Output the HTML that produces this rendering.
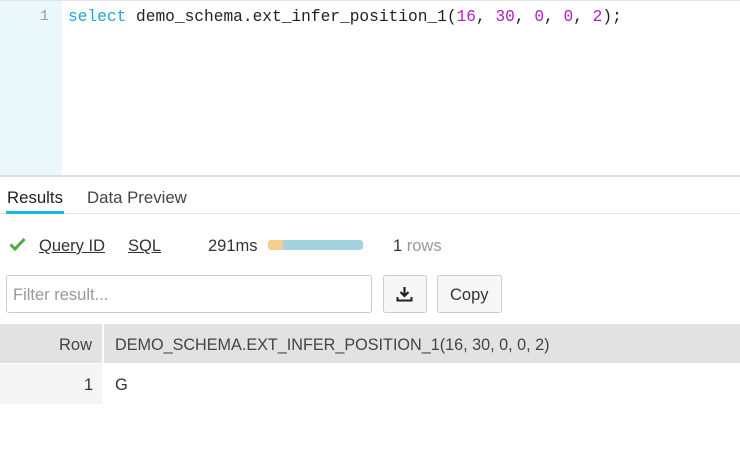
<!DOCTYPE html>
<html><head><style>
body{margin:0;width:740px;height:450px;background:#fff;font-family:"Liberation Sans",sans-serif;position:relative;overflow:hidden;color:#333}
.a{position:absolute}
.mono{font-family:"Liberation Mono",monospace;font-size:16.2px}
</style></head><body>
<div class="a" style="left:0;top:0;width:740px;height:1px;background:#e4e4e4"></div>
<div class="a" style="left:0;top:1px;width:62px;height:175px;background:#eaf8fc"></div>
<div class="a mono" style="left:40px;top:8px;color:#999;font-size:15px">1</div>
<div class="a mono" style="left:68px;top:8px;color:#222;white-space:pre"><span style="color:#1ea8d8">select</span> demo_schema.ext_infer_position_1(<span style="color:#b020c0">16</span>, <span style="color:#b020c0">30</span>, <span style="color:#b020c0">0</span>, <span style="color:#b020c0">0</span>, <span style="color:#b020c0">2</span>);</div>
<div class="a" style="left:0;top:175px;width:740px;height:2px;background:#ddd"></div>
<div class="a" style="left:7px;top:188px;font-size:16.8px;color:#222">Results</div>
<div class="a" style="left:87px;top:188px;font-size:16.8px;color:#444">Data Preview</div>
<div class="a" style="left:0;top:213px;width:740px;height:1px;background:#e4e4e4"></div>
<div class="a" style="left:6px;top:211px;width:58px;height:3px;background:#1eb4e6"></div>
<svg class="a" style="left:9px;top:237px" width="17" height="14" viewBox="0 0 17 14"><path d="M1.5 7.5 L6 12 L15.5 2" stroke="#4caa44" stroke-width="3" fill="none"/></svg>
<div class="a" style="left:39px;top:237px;font-size:16.5px;text-decoration:underline;color:#333">Query ID</div>
<div class="a" style="left:128px;top:237px;font-size:16.5px;text-decoration:underline;color:#333">SQL</div>
<div class="a" style="left:208px;top:237px;font-size:16.5px;color:#333">291ms</div>
<div class="a" style="left:268px;top:240px;width:95px;height:10px;border-radius:3px;background:#a4d2de;overflow:hidden"><div style="width:15px;height:10px;background:#f6cd8a"></div></div>
<div class="a" style="left:393px;top:237px;font-size:16.5px;color:#333">1 <span style="color:#999">rows</span></div>
<div class="a" style="left:6px;top:275px;width:364px;height:36px;border:1px solid #ccc;border-radius:3px"></div>
<div class="a" style="left:13px;top:286px;font-size:16.5px;color:#999">Filter result...</div>
<div class="a" style="left:383px;top:275px;width:42px;height:36px;border:1px solid #ccc;border-radius:3px;background:#f7f7f7"></div>
<svg class="a" style="left:396px;top:286px" width="17" height="16" viewBox="0 0 17 16"><path d="M8.5 1v9M4.5 6l4 4 4-4" stroke="#222" stroke-width="2.2" fill="none"/><path d="M1.5 11v3.5h14V11" stroke="#222" stroke-width="2" fill="none"/></svg>
<div class="a" style="left:437px;top:275px;width:63px;height:36px;border:1px solid #ccc;border-radius:3px;background:#f7f7f7"></div>
<div class="a" style="left:450px;top:286px;font-size:16.5px;color:#333">Copy</div>
<div class="a" style="left:0;top:324px;width:740px;height:39px;background:#e2e2e2"></div>
<div class="a" style="left:102px;top:324px;width:2px;height:80px;background:#fff"></div>
<div class="a" style="left:0;top:364px;width:102px;height:40px;background:#f5f5f5"></div>
<div class="a" style="left:59px;top:336px;font-size:16.5px;color:#444">Row</div>
<div class="a" style="left:115px;top:336px;font-size:16.2px;color:#444">DEMO_SCHEMA.EXT_INFER_POSITION_1(16, 30, 0, 0, 2)</div>
<div class="a" style="left:84px;top:376px;font-size:16.5px;color:#333">1</div>
<div class="a" style="left:115px;top:376px;font-size:16.5px;color:#333">G</div>
</body></html>
